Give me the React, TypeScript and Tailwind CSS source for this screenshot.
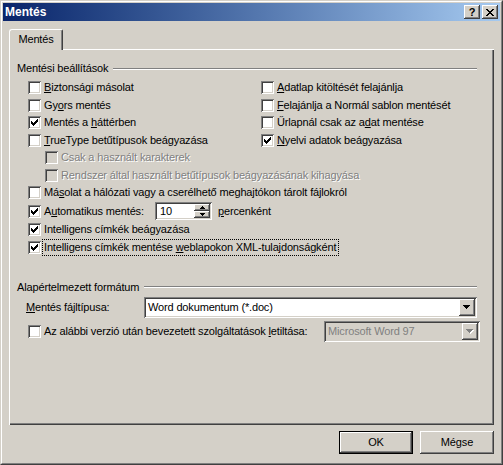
import React from "react";

const raised =
  "shadow-[inset_-1px_-1px_0_#404040,inset_1px_1px_0_#fff,inset_-2px_-2px_0_#808080,inset_2px_2px_0_#d4d0c8]";
const sunken =
  "shadow-[inset_1px_1px_0_#808080,inset_-1px_-1px_0_#fff,inset_2px_2px_0_#404040,inset_-2px_-2px_0_#d4d0c8]";
const grayText = "text-[#808080] [text-shadow:1px_1px_0_#fff]";

function U({ children }: { children: React.ReactNode }) {
  return <span className="underline underline-offset-[1px]">{children}</span>;
}

function Check({ checked, disabled }: { checked?: boolean; disabled?: boolean }) {
  // classic 7x7 pixel check mark
  const cols = [3, 4, 5, 4, 3, 2, 1];
  return (
    <span className={`relative block w-[13px] h-[13px] shrink-0 ${disabled ? "bg-[#d4d0c8]" : "bg-white"} ${sunken}`}>
      {checked && (
        <svg className="absolute left-[2px] top-[2px]" width="9" height="9" viewBox="0 0 9 9" shapeRendering="crispEdges">
          {cols.map((y, i) => (
            <rect key={i} x={i + 1} y={y} width="1" height="3" fill="#000" />
          ))}
        </svg>
      )}
    </span>
  );
}

function Row({ checked, disabled, children, h = "h-[17.5px]", indent }: { checked?: boolean; disabled?: boolean; children: React.ReactNode; h?: string; indent?: boolean }) {
  return (
    <div className={`flex items-center gap-[3px] ${h} ${indent ? "pl-[17px]" : ""}`}>
      <Check checked={checked} disabled={disabled} />
      <span className={`whitespace-nowrap ${disabled ? grayText : ""}`}>{children}</span>
    </div>
  );
}

function DownArrow({ gray }: { gray?: boolean }) {
  const rows = [7, 5, 3, 1];
  return (
    <svg width="8" height="5" viewBox="0 0 8 5" shapeRendering="crispEdges">
      {gray &&
        rows.map((w, i) => <rect key={"s" + i} x={(7 - w) / 2 + 1} y={i + 1} width={w} height="1" fill="#fff" />)}
      {rows.map((w, i) => (
        <rect key={i} x={(7 - w) / 2} y={i} width={w} height="1" fill={gray ? "#808080" : "#000"} />
      ))}
    </svg>
  );
}

function SpinArrow({ up }: { up?: boolean }) {
  const rows = up ? [1, 3, 5] : [5, 3, 1];
  return (
    <svg width="5" height="3" viewBox="0 0 5 3" shapeRendering="crispEdges">
      {rows.map((w, i) => (
        <rect key={i} x={(5 - w) / 2} y={i} width={w} height="1" fill="#000" />
      ))}
    </svg>
  );
}

function Select({ value, width, disabled }: { value: string; width: string; disabled?: boolean }) {
  return (
    <div className={`flex h-[21px] p-[2px] ${width} ${disabled ? "bg-[#d4d0c8]" : "bg-white"} ${sunken}`}>
      <span className={`flex-1 flex items-center pl-[2px] whitespace-nowrap ${disabled ? "text-[#808080]" : ""}`}>{value}</span>
      <div className={`w-[16px] h-[17px] flex items-center justify-center bg-[#d4d0c8] ${raised}`}>
        <DownArrow gray={disabled} />
      </div>
    </div>
  );
}

function CloseGlyph() {
  const px = [
    "XX....XX",
    ".XX..XX.",
    "..XXXX..",
    "...XX...",
    "..XXXX..",
    ".XX..XX.",
    "XX....XX",
  ];
  return (
    <svg width="8" height="7" viewBox="0 0 8 7" shapeRendering="crispEdges">
      {px.flatMap((r, y) =>
        r.split("").map((c, x) => (c === "X" ? <rect key={`${x}-${y}`} x={x} y={y} width="1" height="1" fill="#000" /> : null))
      )}
    </svg>
  );
}

export default function App() {
  return (
    <div className="w-[503px] h-[465px] bg-[#d4d0c8] font-['Liberation_Sans',Arial,sans-serif] text-[11px] leading-[13px] tracking-[-0.15px] text-black border border-t-[#d4d0c8] border-l-[#d4d0c8] border-b-[#404040] border-r-[#404040]">
      <div className="h-full flex flex-col p-px border border-t-white border-l-white border-b-[#808080] border-r-[#808080]">
        {/* title bar */}
        <div className="h-[18px] shrink-0 flex items-center pl-[2px] pr-[2px] bg-linear-to-r from-[#0a246a] to-[#a6caf0]">
          <span className="flex-1 text-white font-bold text-[12px] tracking-normal">Mentés</span>
          <div className={`w-[16px] h-[14px] flex items-center justify-center bg-[#d4d0c8] font-bold text-[11px] leading-none pt-[1px] ${raised}`}>?</div>
          <div className={`ml-[2px] w-[16px] h-[14px] flex items-center justify-center bg-[#d4d0c8] ${raised}`}>
            <CloseGlyph />
          </div>
        </div>

        {/* tab strip */}
        <div className="mt-[8px] pl-[6px] h-[20px] flex">
          <div className="relative z-10 w-[54px] h-[21px] bg-[#d4d0c8] rounded-tl-[3px] rounded-tr-[2px] border-t border-l border-t-white border-l-white border-r border-r-[#404040] shadow-[inset_-1px_0_0_#808080] flex items-center justify-center pb-[1px]">
            Mentés
          </div>
        </div>

        {/* panel */}
        <div className="mx-[6px] h-[376px] flex flex-col shadow-[inset_1px_1px_0_#fff,inset_-1px_-1px_0_#404040,inset_-2px_-2px_0_#808080]">
          <div className="flex items-center h-[13px] mt-[13px] ml-[8px] mr-[17px]">
            <span>Mentési beállítások</span>
            <div className="flex-1 ml-[5px] h-[2px] border-t border-t-[#808080] border-b border-b-white" />
          </div>

          <div className="ml-[19px] mt-[4px] flex flex-col">
            <div className="flex">
              <div className="w-[233px]">
                <Row><U>B</U>iztonsági másolat</Row>
              </div>
              <Row><U>A</U>datlap kitöltését felajánlja</Row>
            </div>
            <div className="flex">
              <div className="w-[233px]">
                <Row>Gy<U>o</U>rs mentés</Row>
              </div>
              <Row><U>F</U>elajánlja a Normál sablon mentését</Row>
            </div>
            <div className="flex">
              <div className="w-[233px]">
                <Row checked>Mentés a <U>h</U>áttérben</Row>
              </div>
              <Row>Űrlapnál csak az a<U>d</U>at mentése</Row>
            </div>
            <div className="flex">
              <div className="w-[233px]">
                <Row><U>T</U>rueType betűtípusok beágyazása</Row>
              </div>
              <Row checked><U>N</U>yelvi adatok beágyazása</Row>
            </div>
            <Row disabled indent>Csak a használt karakterek</Row>
            <Row disabled indent>Rendszer által használt betűtípusok beágyazásának kihagyása</Row>
            <Row>Má<U>s</U>olat a hálózati vagy a cserélhető meghajtókon tárolt fájlokról</Row>

            <div className="flex items-center gap-[3px] h-[19px]">
              <Check checked />
              <span className="w-[108px] whitespace-nowrap">A<U>u</U>tomatikus mentés:</span>
              <div className={`flex w-[57px] h-[18px] p-[2px] bg-white ${sunken}`}>
                <span className="flex-1 flex items-center pl-[3px]">10</span>
                <div className="w-[16px] flex flex-col">
                  <div className={`h-[7px] flex items-center justify-center bg-[#d4d0c8] ${raised}`}>
                    <SpinArrow up />
                  </div>
                  <div className={`h-[7px] flex items-center justify-center bg-[#d4d0c8] ${raised}`}>
                    <SpinArrow />
                  </div>
                </div>
              </div>
              <span className="ml-[3px]"><U>p</U>ercenként</span>
            </div>

            <Row checked h="h-[18px]">Intelligens címkék beágyazása</Row>
            <div className="flex items-center gap-[1px] h-[18px]">
              <Check checked />
              <span className="block h-[17px] leading-[15px] pl-[1px] pr-[2px] border border-dotted border-black whitespace-nowrap">
                Intelligens címkék mentése <U>w</U>eblapokon XML-tulajdonságként
              </span>
            </div>
          </div>

          <div className="flex items-center h-[13px] mt-[24px] ml-[8px] mr-[17px]">
            <span>Alapértelmezett formátum</span>
            <div className="flex-1 ml-[5px] h-[2px] border-t border-t-[#808080] border-b border-b-white" />
          </div>

          <div className="flex items-center h-[21px] mt-[3px] ml-[17px]">
            <span className="w-[118px] whitespace-nowrap"><U>M</U>entés fájltípusa:</span>
            <Select value="Word dokumentum (*.doc)" width="w-[333px]" />
          </div>

          <div className="flex items-center h-[21px] mt-[3px] ml-[19px] gap-[3px]">
            <Check />
            <span className="w-[277px] whitespace-nowrap">Az alábbi verzió után bevezetett szolgáltatások <U>l</U>etiltása:</span>
            <Select value="Microsoft Word 97" width="w-[156px]" disabled />
          </div>
        </div>

        {/* buttons */}
        <div className="mt-[6px] flex justify-end gap-[7px] pr-[6px]">
          <div className="w-[74px] h-[23px] border border-black">
            <div className={`h-full flex items-center justify-center bg-[#d4d0c8] ${raised}`}>OK</div>
          </div>
          <div className={`w-[74px] h-[23px] flex items-center justify-center bg-[#d4d0c8] ${raised}`}>Mégse</div>
        </div>
      </div>
    </div>
  );
}
